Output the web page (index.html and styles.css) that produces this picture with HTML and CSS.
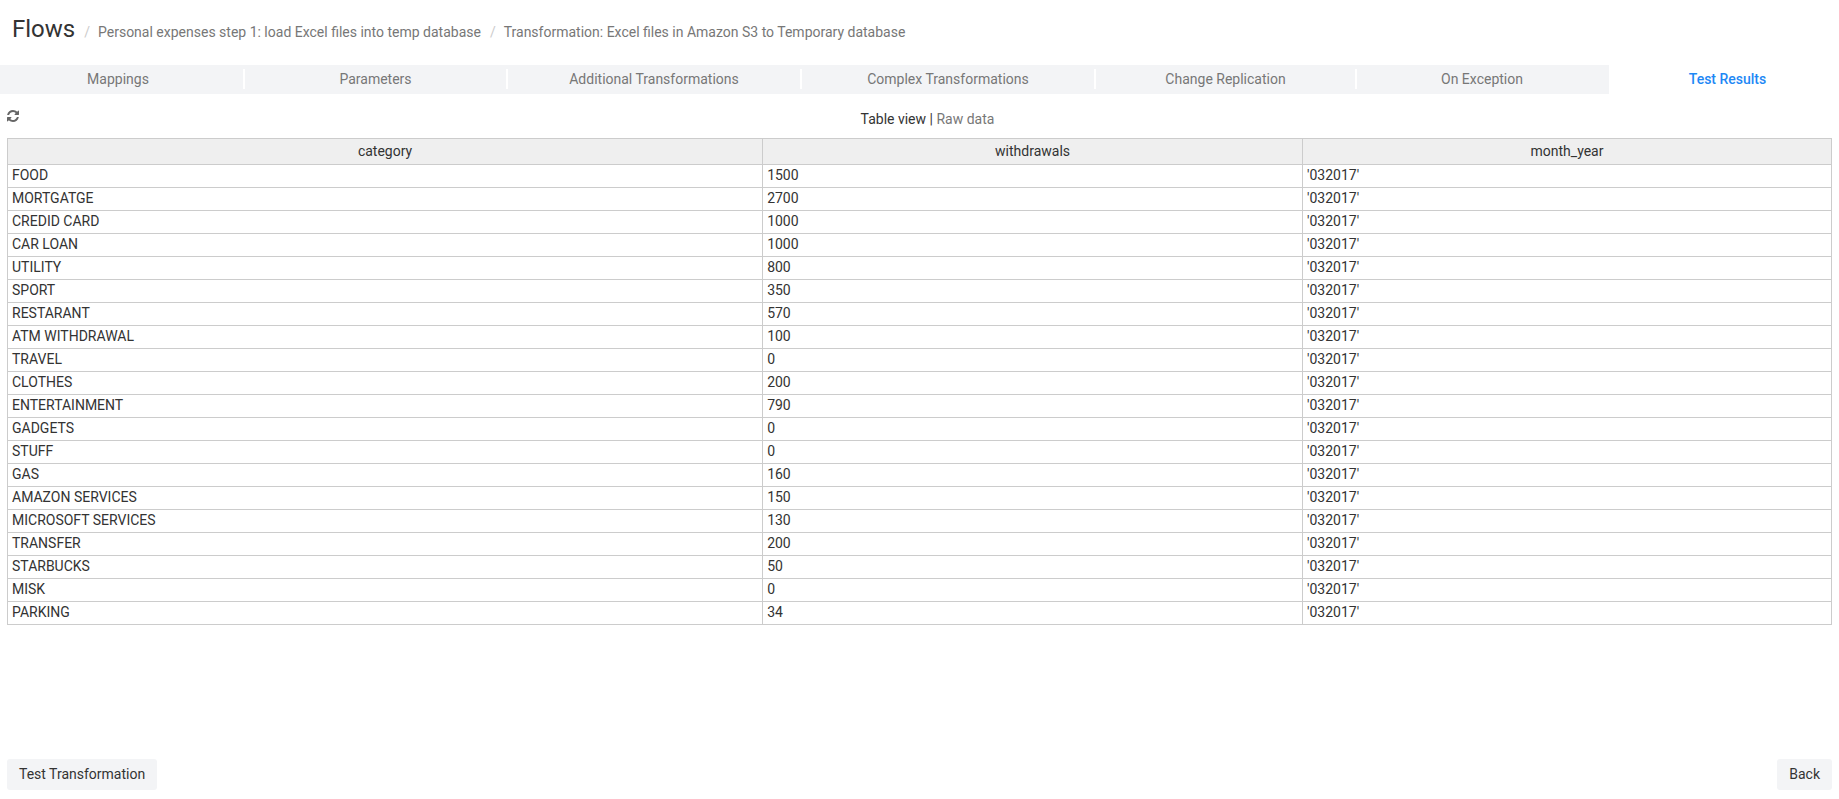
FILE: index.html
```html
<!DOCTYPE html>
<html lang="en">
<head>
<meta charset="utf-8">
<title>Flows</title>
<link rel="stylesheet" href="styles.css">
</head>
<body>
<div class="page">
  <header class="header">
    <h1 class="title">Flows</h1>
    <span class="slash">/</span>
    <a class="crumb" href="#">Personal expenses step 1: load Excel files into temp database</a>
    <span class="slash">/</span>
    <a class="crumb" href="#">Transformation: Excel files in Amazon S3 to Temporary database</a>
  </header>
  <nav class="tabs-wrap">
    <div class="tabs">
      <a class="tab" href="#">Mappings</a>
      <a class="tab" href="#">Parameters</a>
      <a class="tab" href="#">Additional Transformations</a>
      <a class="tab" href="#">Complex Transformations</a>
      <a class="tab" href="#">Change Replication</a>
      <a class="tab tab-last" href="#">On Exception</a>
      <a class="tab tab-active" href="#">Test Results</a>
    </div>
  </nav>
  <main class="main">
    <div class="toolbar">
      <button class="refresh" type="button" aria-label="Refresh">
        <svg class="refresh-icon" viewBox="0 0 1536 1536" aria-hidden="true"><path fill="currentColor" d="M1511 928q0 5-1 7-64 268-268 434.500t-478 166.500q-146 0-282.500-55t-243.500-157l-129 129q-19 19-45 19t-45-19-19-45v-448q0-26 19-45t45-19h448q26 0 45 19t19 45-19 45l-137 137q71 66 161 102t187 36q134 0 250-65t186-179q11-17 53-117 8-23 30-23h192q13 0 22.500 9.500t9.500 22.500zm25-800v448q0 26-19 45t-45 19h-448q-26 0-45-19t-19-45 19-45l138-138q-148-137-349-137-134 0-250 65t-186 179q-11 17-53 117-8 23-30 23h-199q-13 0-22.500-9.500t-9.500-22.500v-7q65-268 270-434.500t480-166.500q146 0 284 55.500t245 156.500l130-129q19-19 45-19t45 19 19 45z"/></svg>
      </button>
      <div class="views"><a class="view view-on" href="#">Table view</a> | <a class="view" href="#">Raw data</a></div>
    </div>
    <table class="results">
      <colgroup><col class="col-category"><col class="col-withdrawals"><col class="col-month"></colgroup>
      <thead><tr><th>category</th><th>withdrawals</th><th>month_year</th></tr></thead>
      <tbody>
        <tr><td>FOOD</td><td>1500</td><td>'032017'</td></tr>
        <tr><td>MORTGATGE</td><td>2700</td><td>'032017'</td></tr>
        <tr><td>CREDID CARD</td><td>1000</td><td>'032017'</td></tr>
        <tr><td>CAR LOAN</td><td>1000</td><td>'032017'</td></tr>
        <tr><td>UTILITY</td><td>800</td><td>'032017'</td></tr>
        <tr><td>SPORT</td><td>350</td><td>'032017'</td></tr>
        <tr><td>RESTARANT</td><td>570</td><td>'032017'</td></tr>
        <tr><td>ATM WITHDRAWAL</td><td>100</td><td>'032017'</td></tr>
        <tr><td>TRAVEL</td><td>0</td><td>'032017'</td></tr>
        <tr><td>CLOTHES</td><td>200</td><td>'032017'</td></tr>
        <tr><td>ENTERTAINMENT</td><td>790</td><td>'032017'</td></tr>
        <tr><td>GADGETS</td><td>0</td><td>'032017'</td></tr>
        <tr><td>STUFF</td><td>0</td><td>'032017'</td></tr>
        <tr><td>GAS</td><td>160</td><td>'032017'</td></tr>
        <tr><td>AMAZON SERVICES</td><td>150</td><td>'032017'</td></tr>
        <tr><td>MICROSOFT SERVICES</td><td>130</td><td>'032017'</td></tr>
        <tr><td>TRANSFER</td><td>200</td><td>'032017'</td></tr>
        <tr><td>STARBUCKS</td><td>50</td><td>'032017'</td></tr>
        <tr><td>MISK</td><td>0</td><td>'032017'</td></tr>
        <tr><td>PARKING</td><td>34</td><td>'032017'</td></tr>
      </tbody>
    </table>
  </main>
  <footer class="footer">
    <button class="btn" type="button">Test Transformation</button>
    <button class="btn" type="button">Back</button>
  </footer>
</div>
</body>
</html>
```

FILE: styles.css
```css
* {
  box-sizing: border-box;
}

body {
  margin: 0;
  background: #fff;
  color: #333;
  font-family: Roboto, sans-serif;
  font-size: 14px;
  line-height: 20px;
}

a {
  color: #777;
  text-decoration: none;
}

.page {
  display: flex;
  flex-direction: column;
  min-height: 100vh;
}

.header {
  display: flex;
  align-items: baseline;
  padding: 13px 12px 20px;
}

.title {
  margin: 0;
  font-size: 24px;
  font-weight: 400;
  line-height: 32px;
}

.slash {
  padding: 0 8px 0 9px;
  color: #ccc;
}

.tabs-wrap {
  overflow: hidden;
}

.tabs {
  display: grid;
  grid-template-columns: 252fr 263fr 294fr 294fr 261fr 252fr 239fr;
  margin: 0 -9px 0 -7px;
}

.tab {
  display: grid;
  grid-template-columns: 1fr 2px;
  padding: 4px 0 5px;
  background: #f3f4f6;
  text-align: center;
}

.tab::after {
  content: "";
  background: #fff;
}

.tab-last::after {
  background: none;
}

.tab-active {
  background: #fff;
  color: #1e88f5;
  font-weight: 500;
}

.main {
  flex: 1;
  padding: 0 7px;
}

.toolbar {
  display: grid;
  grid-template-columns: auto 1fr;
  column-gap: 4px;
  padding: 15px 0 9px;
  text-align: center;
}

.refresh {
  display: flex;
  align-self: start;
  padding: 1px 0;
  border: 0;
  background: none;
  color: #666;
}

.refresh-icon {
  width: 12px;
  height: 12px;
}

.view-on {
  color: #333;
}

.results {
  width: 100%;
  table-layout: fixed;
  border-collapse: collapse;
}

.col-category {
  width: 41.4%;
}

.col-withdrawals {
  width: 29.6%;
}

.col-month {
  width: 29%;
}

.results th,
.results td {
  padding: 0 4px 2px;
  border: 1px solid #ccc;
}

.results th {
  padding: 2px 4px 3px;
  background: #efefef;
  font-weight: 400;
}

.footer {
  display: flex;
  justify-content: space-between;
  padding: 9px 7px;
}

.btn {
  padding: 5px 12px 6px;
  border: 0;
  border-radius: 3px;
  background: #f3f4f6;
  color: #333;
  font: inherit;
}
```
